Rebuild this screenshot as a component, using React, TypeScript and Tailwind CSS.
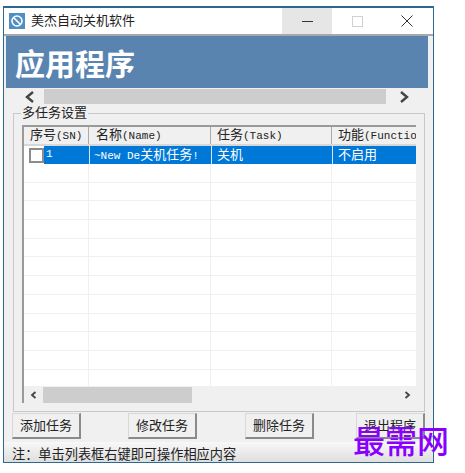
const rows = Array.from({ length: 12 });
const font = "font-['Liberation_Sans','Noto_Sans_CJK_SC',sans-serif]";
const mono = "font-['Liberation_Mono','Noto_Sans_CJK_SC',monospace]";

function Cjk({ children }: { children: string }) {
  return <span className={`text-[13px] ${font}`}>{children}</span>;
}

function Btn({ label, className }: { label: string; className: string }) {
  return (
    <button className={`w-[69px] h-[26px] bg-[#f0f0f0] border border-[#d8d8d8] border-r-2 border-b-2 border-r-[#8a8a8a] border-b-[#8a8a8a] text-[13px] text-[#222] ${className}`}>
      {label}
    </button>
  );
}

export default function App() {
  return (
    <div className={`w-[465px] h-[473px] bg-white overflow-hidden pt-[6px] pl-[3px] relative ${font}`}>
      <div className="w-[431px] h-[457px] border border-[#2b6a8c] border-t-2 bg-[#f0f0f0] flex flex-col overflow-hidden">
        {/* title bar */}
        <div className="h-[28px] shrink-0 bg-white flex items-center border-b-2 border-[#a8a8a8]">
          <svg width="16" height="16" viewBox="0 0 16 16" className="ml-[5px] shrink-0">
            <rect width="16" height="16" fill="#4f8fc4" />
            <circle cx="8" cy="8" r="5" fill="none" stroke="#fff" strokeWidth="1.6" />
            <path d="M4.5 4.5 11.5 11.5" stroke="#fff" strokeWidth="1.6" />
          </svg>
          <span className="ml-[6px] text-[13px] text-[#222]">美杰自动关机软件</span>
          <div className="ml-auto mr-[1px] flex h-full">
            <div className="w-[50px] bg-[#e6e6e6] flex items-center justify-center">
              <div className="w-[11px] h-[1px] bg-[#333]" />
            </div>
            <div className="w-[50px] flex items-center justify-center">
              <div className="w-[11px] h-[11px] border border-[#d0d0d0]" />
            </div>
            <div className="w-[50px] flex items-center justify-center">
              <svg width="12" height="12" viewBox="0 0 12 12">
                <path d="M.5.5 11.5 11.5M11.5.5.5 11.5" stroke="#333" strokeWidth="1" />
              </svg>
            </div>
          </div>
        </div>

        {/* banner */}
        <div className="h-[52px] shrink-0 ml-[2px] mr-[5px] bg-[#5a84b0] flex items-center pl-[9px] pt-[6px]">
          <span className="text-[30px] font-bold text-white leading-none">应用程序</span>
        </div>

        {/* outer scrollbar */}
        <div className="h-[17px] shrink-0 flex items-center ml-[2px]">
          <svg width="12" height="12" viewBox="0 0 12 12" className="ml-[18px]">
            <path d="M9 1 3 6l6 5" fill="none" stroke="#444" strokeWidth="2.4" />
          </svg>
          <div className="ml-[8px] w-[342px] h-[15px] bg-[#cdcdcd]" />
          <svg width="12" height="12" viewBox="0 0 12 12" className="ml-[12px]">
            <path d="M3 1l6 5-6 5" fill="none" stroke="#444" strokeWidth="2.4" />
          </svg>
        </div>

        {/* group box */}
        <div className="relative ml-[9px] mt-[8px] w-[412px] h-[299px] shrink-0 border border-[#c8c8c8] pt-[11px] pl-[8px]">
          <span className="absolute -top-[9px] left-[7px] bg-[#f0f0f0] px-[1px] text-[13px] leading-[16px] text-[#222]">
            多任务设置
          </span>
          <div className="w-[394px] h-[278px] bg-white border-l-2 border-t-2 border-[#9a9a9a] flex flex-col">
            <div className={`h-[19px] shrink-0 flex bg-[#f0f0f0] border-b-2 border-[#d8d8d8] text-[11px] leading-[16px] text-[#222] ${mono}`}>
              <div className="w-[65px] pl-[6px] border-r border-[#aaa] whitespace-nowrap"><Cjk>序号</Cjk>(SN)</div>
              <div className="w-[122px] pl-[7px] border-r border-[#aaa] whitespace-nowrap"><Cjk>名称</Cjk>(Name)</div>
              <div className="w-[121px] pl-[6px] border-r border-[#aaa] whitespace-nowrap"><Cjk>任务</Cjk>(Task)</div>
              <div className="flex-1 pl-[6px] whitespace-nowrap overflow-hidden"><Cjk>功能</Cjk>(Function)</div>
            </div>
            <div className="flex-1 overflow-hidden">
              <div className={`h-[18px] flex text-white text-[11px] leading-[17px] ${mono}`}>
                <div className="w-[65px] shrink-0 flex">
                  <div className="w-[15px] h-[15px] ml-[5px] mt-[2px] border-2 border-[#8c8c8c] bg-white" />
                  <div className="flex-1 bg-[#0078d7] pl-[2px]">1</div>
                </div>
                <div className="w-[122px] pl-[4px] bg-[#0078d7] border-l border-[#d8e8f4] whitespace-nowrap">~New De<Cjk>关机任务</Cjk>!</div>
                <div className="w-[121px] pl-[5px] bg-[#0078d7] border-l border-[#d8e8f4]"><Cjk>关机</Cjk></div>
                <div className="flex-1 pl-[5px] bg-[#0078d7] border-l border-[#d8e8f4]"><Cjk>不启用</Cjk></div>
              </div>
              {rows.map((_, i) => (
                <div key={i} className="h-[18.7px] flex border-b border-[#f0f0f0]">
                  <div className="w-[65px] border-r border-[#f0f0f0]" />
                  <div className="w-[122px] border-r border-[#f0f0f0]" />
                  <div className="w-[121px] border-r border-[#f0f0f0]" />
                </div>
              ))}
            </div>
            <div className="h-[17px] shrink-0 bg-[#f0f0f0] flex items-center">
              <svg width="10" height="10" viewBox="0 0 10 10" className="ml-[5px]">
                <path d="M6.5 2 3 5l3.500 3" fill="none" stroke="#444" strokeWidth="1.800" />
              </svg>
              <div className="ml-[4px] w-[149px] h-[16px] bg-[#cdcdcd]" />
              <svg width="10" height="10" viewBox="0 0 10 10" className="ml-auto mr-[4px]">
                <path d="M3.500 2 7 5 3.500 8" fill="none" stroke="#444" strokeWidth="1.800" />
              </svg>
            </div>
          </div>
        </div>

        {/* buttons */}
        <div className="flex ml-[8px] mt-[1px] shrink-0">
          <Btn label="添加任务" className="" />
          <Btn label="修改任务" className="ml-[47px]" />
          <Btn label="删除任务" className="ml-[48px]" />
          <Btn label="退出程序" className="ml-[42px]" />
        </div>

        {/* status bar */}
        <div className="flex-1 mt-[3px] bg-gradient-to-b from-[#f8f8f8] to-[#dcdcdc] pl-[8px] pt-[4px] text-[13.2px] text-[#222] leading-[18px] whitespace-nowrap">
          注：单击列表框右键即可操作相应内容
        </div>
      </div>

      {/* watermark */}
      <div className="absolute left-[353px] top-[426px] text-[32px] font-medium leading-none text-[#8a00ff] whitespace-nowrap font-['Liberation_Serif','Noto_Sans_CJK_SC',serif]">
        最需网
      </div>
    </div>
  );
}
